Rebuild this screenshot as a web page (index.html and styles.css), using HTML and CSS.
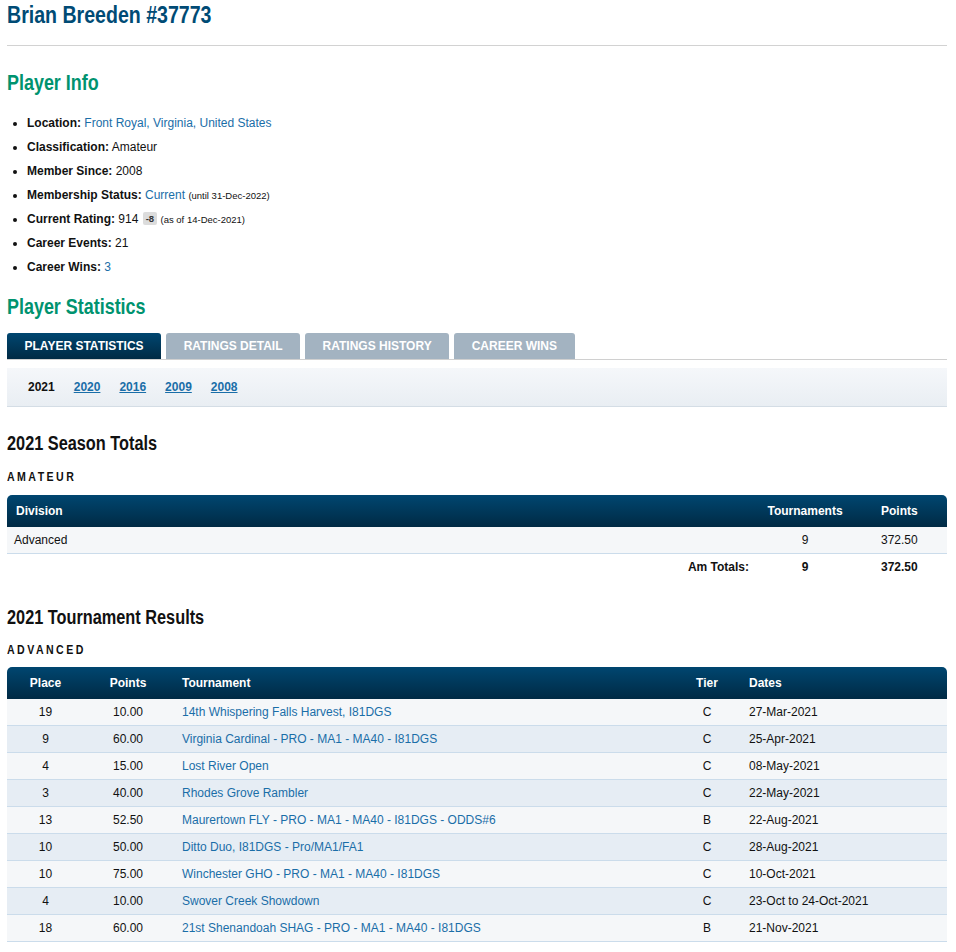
FILE: index.html
```html
<!DOCTYPE html>
<html>
<head>
<meta charset="utf-8">
<link rel="stylesheet" href="styles.css">
</head>
<body>
<h1 class="title"><span class="narrow">Brian Breeden #37773</span></h1>
<hr class="rule">
<h2 class="section"><span class="narrow">Player Info</span></h2>
<ul class="info">
  <li><strong>Location:</strong> <a href="#">Front Royal, Virginia, United States</a></li>
  <li><strong>Classification:</strong> Amateur</li>
  <li><strong>Member Since:</strong> 2008</li>
  <li><strong>Membership Status:</strong> <a href="#">Current</a> <small>(until 31-Dec-2022)</small></li>
  <li><strong>Current Rating:</strong> 914 <span class="badge">-8</span> <small>(as of 14-Dec-2021)</small></li>
  <li><strong>Career Events:</strong> 21</li>
  <li><strong>Career Wins:</strong> <a href="#">3</a></li>
</ul>
<h2 class="section stats"><span class="narrow">Player Statistics</span></h2>
<div class="tabs">
  <span class="tab active">PLAYER STATISTICS</span>
  <span class="tab">RATINGS DETAIL</span>
  <span class="tab">RATINGS HISTORY</span>
  <span class="tab">CAREER WINS</span>
</div>
<div class="years">
  <span class="year current">2021</span>
  <a class="year" href="#">2020</a>
  <a class="year" href="#">2016</a>
  <a class="year" href="#">2009</a>
  <a class="year" href="#">2008</a>
</div>
<h3 class="subhead"><span class="narrow">2021 Season Totals</span></h3>
<h4 class="caps"><span class="narrow">AMATEUR</span></h4>
<table class="grid totals">
  <thead>
    <tr><th class="c-div">Division</th><th class="c-tour">Tournaments</th><th class="c-pts">Points</th></tr>
  </thead>
  <tbody>
    <tr class="odd"><td class="c-div">Advanced</td><td class="c-tour">9</td><td class="c-pts">372.50</td></tr>
    <tr class="sum"><td class="c-label">Am Totals:</td><td class="c-tour">9</td><td class="c-pts">372.50</td></tr>
  </tbody>
</table>
<h3 class="subhead second"><span class="narrow">2021 Tournament Results</span></h3>
<h4 class="caps"><span class="narrow">ADVANCED</span></h4>
<table class="grid results">
  <thead>
    <tr><th class="c-place">Place</th><th class="c-points">Points</th><th class="c-name">Tournament</th><th class="c-tier">Tier</th><th class="c-dates">Dates</th></tr>
  </thead>
  <tbody>
    <tr class="odd"><td class="c-place">19</td><td class="c-points">10.00</td><td class="c-name"><a href="#">14th Whispering Falls Harvest, I81DGS</a></td><td class="c-tier">C</td><td class="c-dates">27-Mar-2021</td></tr>
    <tr class="even"><td class="c-place">9</td><td class="c-points">60.00</td><td class="c-name"><a href="#">Virginia Cardinal - PRO - MA1 - MA40 - I81DGS</a></td><td class="c-tier">C</td><td class="c-dates">25-Apr-2021</td></tr>
    <tr class="odd"><td class="c-place">4</td><td class="c-points">15.00</td><td class="c-name"><a href="#">Lost River Open</a></td><td class="c-tier">C</td><td class="c-dates">08-May-2021</td></tr>
    <tr class="even"><td class="c-place">3</td><td class="c-points">40.00</td><td class="c-name"><a href="#">Rhodes Grove Rambler</a></td><td class="c-tier">C</td><td class="c-dates">22-May-2021</td></tr>
    <tr class="odd"><td class="c-place">13</td><td class="c-points">52.50</td><td class="c-name"><a href="#">Maurertown FLY - PRO - MA1 - MA40 - I81DGS - ODDS#6</a></td><td class="c-tier">B</td><td class="c-dates">22-Aug-2021</td></tr>
    <tr class="even"><td class="c-place">10</td><td class="c-points">50.00</td><td class="c-name"><a href="#">Ditto Duo, I81DGS - Pro/MA1/FA1</a></td><td class="c-tier">C</td><td class="c-dates">28-Aug-2021</td></tr>
    <tr class="odd"><td class="c-place">10</td><td class="c-points">75.00</td><td class="c-name"><a href="#">Winchester GHO - PRO - MA1 - MA40 - I81DGS</a></td><td class="c-tier">C</td><td class="c-dates">10-Oct-2021</td></tr>
    <tr class="even"><td class="c-place">4</td><td class="c-points">10.00</td><td class="c-name"><a href="#">Swover Creek Showdown</a></td><td class="c-tier">C</td><td class="c-dates">23-Oct to 24-Oct-2021</td></tr>
    <tr class="odd"><td class="c-place">18</td><td class="c-points">60.00</td><td class="c-name"><a href="#">21st Shenandoah SHAG - PRO - MA1 - MA40 - I81DGS</a></td><td class="c-tier">B</td><td class="c-dates">21-Nov-2021</td></tr>
  </tbody>
</table>
</body>
</html>
```
FILE: styles.css
```css
html, body {
  background: #fff;
}
body {
  margin: 0 9px 0 7px;
  font-family: "Liberation Sans", Arial, Helvetica, sans-serif;
  font-size: 12px;
  color: #111;
}
a {
  color: #1a6ea8;
  text-decoration: none;
}
.title, .section, .subhead {
  font-family: "Liberation Sans", Arial, sans-serif;
  font-weight: bold;
  margin: 0;
}
.narrow {
  display: inline-block;
  white-space: nowrap;
  transform: scaleX(0.815);
  transform-origin: 0 50%;
}
.title {
  font-size: 24px;
  line-height: 30px;
  color: #004b75;
}
.rule {
  border: 0;
  border-top: 1px solid #d2d2d2;
  margin: 15px 0 0;
  height: 0;
}
.section {
  font-size: 22px;
  line-height: 28px;
  color: #00936f;
  margin-top: 23px;
}
.section.stats {
  margin-top: 14px;
}
.info {
  margin: 14px 0 0;
  padding-left: 20px;
  list-style: disc;
}
.info li {
  line-height: 24px;
  height: 24px;
}
.info small {
  font-size: 9.5px;
}
.badge {
  display: inline-block;
  background: #dcdcdc;
  color: #333;
  font-size: 9.5px;
  font-weight: bold;
  line-height: 13px;
  padding: 0 3px;
  border-radius: 2px;
  margin-left: 1px;
  vertical-align: 1px;
}
.tabs {
  display: flex;
  gap: 5px;
  margin-top: 12px;
  border-bottom: 1px solid #d0d0d0;
}
.tab {
  display: block;
  height: 26px;
  line-height: 26px;
  padding: 0 17.5px;
  background: #a3b3c1;
  color: #fff;
  font-weight: bold;
  font-size: 12px;
  border-radius: 3px 3px 0 0;
}
.tab.active {
  background: linear-gradient(#004670, #002a44);
}
.years {
  margin-top: 8px;
  height: 38px;
  border-bottom: 1px solid #d4dde5;
  background: linear-gradient(#f5f7fa, #e9eef3);
  display: flex;
  align-items: center;
  gap: 19px;
  padding-left: 21px;
  font-weight: bold;
}
.year.current {
  color: #111;
}
a.year {
  text-decoration: underline;
}
.subhead {
  font-size: 20px;
  line-height: 26px;
  color: #111;
  margin-top: 23px;
}
.subhead.second {
  margin-top: 24px;
}
.caps {
  font-size: 13px;
  line-height: 18px;
  letter-spacing: 3px;
  font-weight: bold;
  margin: 12px 0 0;
  color: #111;
}
.subhead.second + .caps {
  margin-top: 11px;
}
.grid {
  width: 100%;
  border-collapse: separate;
  border-spacing: 0;
  margin-top: 9px;
  table-layout: fixed;
}
.grid.results {
  margin-top: 8px;
}
.grid th {
  height: 32px;
  padding: 0;
  color: #fff;
  font-weight: bold;
  font-size: 12px;
  background: linear-gradient(#004670, #002a44);
  vertical-align: middle;
}
.grid th:first-child {
  border-top-left-radius: 5px;
}
.grid th:last-child {
  border-top-right-radius: 5px;
}
.grid td {
  height: 26px;
  padding: 0;
  vertical-align: middle;
  border-bottom: 1px solid #cbdceb;
}
.grid tr.odd td {
  background: #f5f7f9;
}
.grid tr.even td {
  background: #e6edf4;
}
.grid tr.sum td {
  background: #fff;
  border-bottom: 0;
  font-weight: bold;
}
.totals .c-div {
  text-align: left;
  padding-left: 9px;
}
.totals td.c-div {
  padding-left: 7px;
}
.totals .c-label {
  text-align: right;
  padding-right: 9px;
}
.totals .c-tour {
  width: 94px;
  text-align: center;
}
.totals .c-pts {
  width: 66px;
  text-align: left;
  padding-left: 29px;
}
.results .c-place {
  width: 77px;
  text-align: center;
}
.results .c-points {
  width: 88px;
  text-align: center;
}
.results .c-name {
  text-align: left;
  padding-left: 10px;
}
.results .c-tier {
  width: 64px;
  text-align: center;
}
.results .c-dates {
  width: 198px;
  text-align: left;
  padding-left: 10px;
}
```
